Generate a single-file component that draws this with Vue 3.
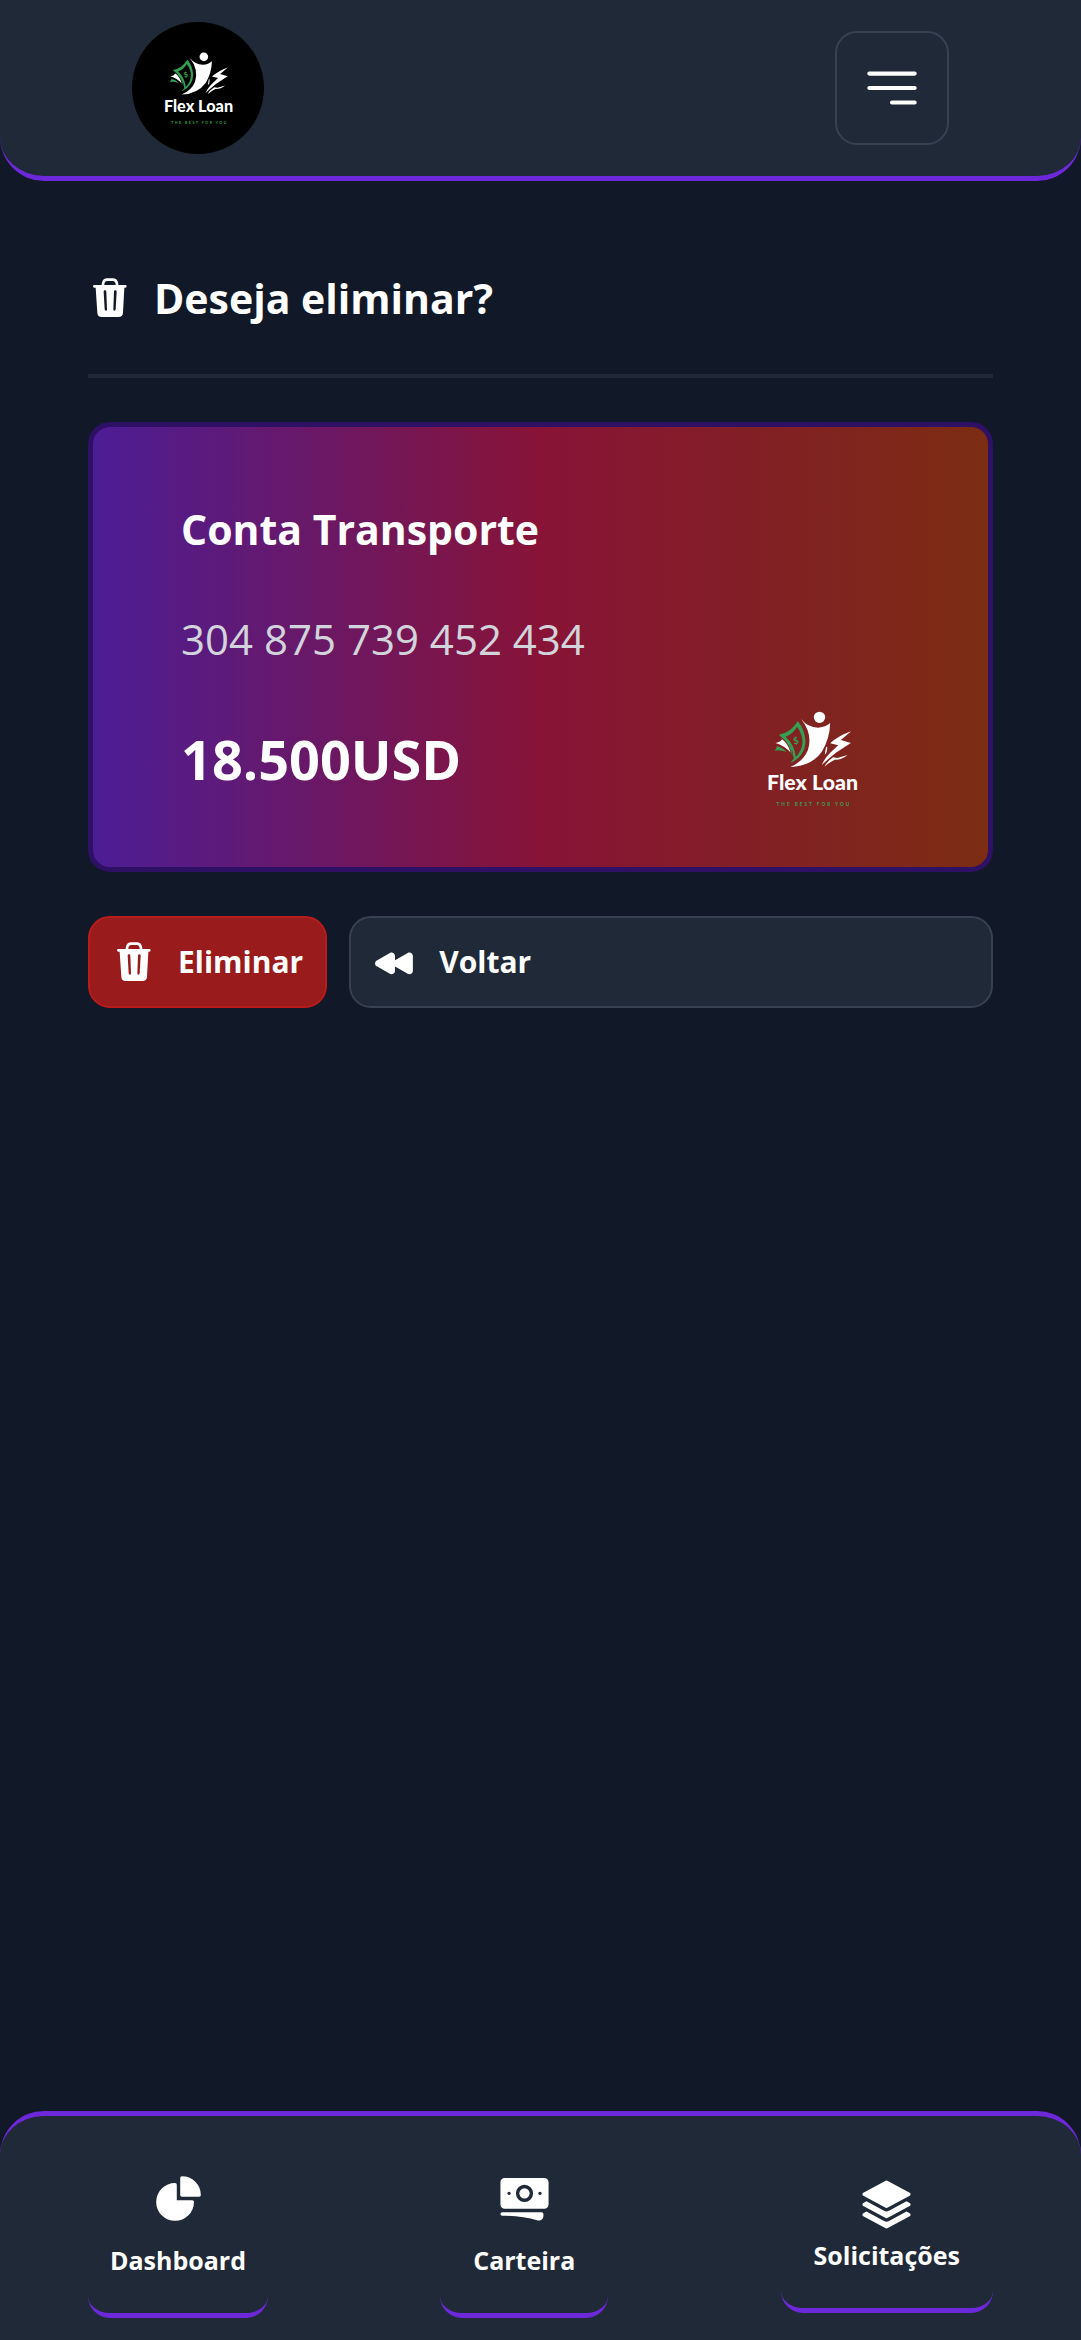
<script setup>
import { h } from 'vue'

const account = {
  name: 'Conta Transporte',
  number: '304 875 739 452 434',
  balance: '18.500USD'
}

const navItems = [
  {
    label: 'Dashboard',
    size: 'narrow',
    paths: [
      'M2.25 13.5a8.25 8.25 0 0 1 8.25-8.25.75.75 0 0 1 .75.75v6.75H18a.75.75 0 0 1 .75.75 8.25 8.25 0 0 1-16.5 0Z',
      'M12.75 3a.75.75 0 0 1 .75-.75 8.25 8.25 0 0 1 8.25 8.25.75.75 0 0 1-.75.75h-7.5a.75.75 0 0 1-.75-.75V3Z'
    ]
  },
  {
    label: 'Carteira',
    size: 'wide',
    paths: [
      'M12 7.5a2.25 2.25 0 1 0 0 4.5 2.25 2.25 0 0 0 0-4.5Z',
      'M1.5 4.875C1.5 3.839 2.34 3 3.375 3h17.25c1.035 0 1.875.84 1.875 1.875v9.75c0 1.036-.84 1.875-1.875 1.875H3.375A1.875 1.875 0 0 1 1.5 14.625v-9.75ZM8.25 9.75a3.75 3.75 0 1 1 7.5 0 3.75 3.75 0 0 1-7.5 0ZM18.75 9a.75.75 0 0 0-.75.75v.008c0 .414.336.75.75.75h.008a.75.75 0 0 0 .75-.75V9.75a.75.75 0 0 0-.75-.75h-.008ZM4.5 9.75A.75.75 0 0 1 5.25 9h.008a.75.75 0 0 1 .75.75v.008a.75.75 0 0 1-.75.75H5.25a.75.75 0 0 1-.75-.75V9.75Z',
      'M2.25 18a.75.75 0 0 0 0 1.5c5.4 0 10.63.722 15.6 2.075 1.19.324 2.4-.558 2.4-1.82V18.75a.75.75 0 0 0-.75-.75H2.25Z'
    ]
  },
  {
    label: 'Solicitações',
    size: 'wide compact',
    paths: [
      'M11.644 1.59a.75.75 0 0 1 .712 0l9.75 5.25a.75.75 0 0 1 0 1.32l-9.75 5.25a.75.75 0 0 1-.712 0l-9.75-5.25a.75.75 0 0 1 0-1.32l9.75-5.25Z',
      'm3.265 10.602 7.668 4.129a2.25 2.25 0 0 0 2.134 0l7.668-4.13 1.37.739a.75.75 0 0 1 0 1.32l-9.75 5.25a.75.75 0 0 1-.71 0l-9.75-5.25a.75.75 0 0 1 0-1.32l1.37-.738Z',
      'm10.933 19.231-7.668-4.13-1.37.739a.75.75 0 0 0 0 1.32l9.75 5.25c.221.12.489.12.71 0l9.75-5.25a.75.75 0 0 0 0-1.32l-1.37-.738-7.668 4.13a2.25 2.25 0 0 1-2.134-.001Z'
    ]
  }
]

const TrashIcon = () =>
  h('svg', { viewBox: '0 0 132 132', 'aria-hidden': 'true' }, [
    h('path', {
      fill: 'none', stroke: 'currentColor', 'stroke-width': 8,
      d: 'M45 30V24Q47 11 58 11H74Q85 11 87 24V30'
    }),
    h('path', {
      fill: 'currentColor', 'fill-rule': 'evenodd',
      d: 'M19 27H112Q116 27 116 31Q116 35 112 35H109L105 110Q104 123 91 123H41Q29 123 28 110L23 35H19Q15 35 15 31Q15 27 19 27ZM47 47L50 100Q50 104 54 104Q58 104 57 100L55 47Q55 43 51 43Q47 43 47 47ZM78 47L76 100Q76 104 79 104Q83 104 83 100L86 47Q86 43 82 43Q78 43 78 47Z'
    })
  ])

const BrandMark = () =>
  h('svg', { viewBox: '20 30 272 288', role: 'img', 'aria-label': 'Flex Loan' }, [
    h('g', { fill: '#fff' }, [
      h('circle', { cx: 177, cy: 49, r: 17 }),
      h('path', { d: 'M122 54Q142 80 173 80Q196 78 209 66Q208 112 184 152Q152 196 89 198Q128 182 142 148Q158 100 122 54Z' }),
      h('path', { d: 'M272 91L241 117L271 126L226 155Q202 174 184 192Q192 169 222 143L233 133L209 127Q234 104 272 91Z' }),
      h('path', { d: 'M261 162Q243 177 223 176Q207 183 192 197Q199 181 218 169L231 171Z' }),
      h('path', { d: 'M197 137Q194 150 193 161Q201 154 200 138Z' }),
      h('path', { d: 'M45 126Q58 125 65 115Q82 128 90 154Q71 134 45 126Z' })
    ]),
    h('g', { fill: '#34a053' }, [
      h('path', { 'fill-rule': 'evenodd', d: 'M112 60Q133 87 135 119Q135 164 90 186Q94 178 100 173Q98 132 55 101Q91 96 112 60ZM110 77Q95 101 75 107Q102 131 106 168Q125 148 126 123Q126 99 110 77Z' }),
      h('path', { d: 'M42 149Q48 145 49 136Q66 140 78 153Q58 145 42 149Z' }),
      h('path', { d: 'M55 101Q90 117 97 164Q93 159 91 149Q82 120 55 101Z' })
    ]),
    h('text', { class: 'mark-currency', x: 98, y: 129, transform: 'rotate(-12 105 119)' }, '$'),
    h('text', { class: 'mark-name', x: 156, y: 267, 'text-anchor': 'middle' }, 'Flex Loan'),
    h('text', { class: 'mark-tagline', x: 160, y: 314, 'text-anchor': 'middle' }, 'THE BEST FOR YOU')
  ])
</script>

<template>
  <div class="page">
    <header class="topbar">
      <a href="#" class="brand"><BrandMark class="brand-mark" /></a>
      <button type="button" class="menu" aria-label="Menu">
        <svg viewBox="0 0 24 24" aria-hidden="true">
          <path d="M3.75 6.75h16.5M3.75 12h16.5M12 17.25h8.25" fill="none" stroke="currentColor" stroke-width="1.5" stroke-linecap="round" />
        </svg>
      </button>
    </header>

    <main>
      <h1 class="title"><TrashIcon class="icon" />Deseja eliminar?</h1>

      <section class="card">
        <h2>{{ account.name }}</h2>
        <p class="number">{{ account.number }}</p>
        <div class="balance-row">
          <strong>{{ account.balance }}</strong>
          <BrandMark class="card-mark" />
        </div>
      </section>

      <div class="actions">
        <button type="button" class="action danger"><TrashIcon class="icon" />Eliminar</button>
        <button type="button" class="action back">
          <svg class="icon" viewBox="0 0 24 24" aria-hidden="true">
            <path fill="currentColor" d="M9.195 18.44c1.25.714 2.805-.189 2.805-1.629v-2.34l6.945 3.968c1.25.715 2.805-.188 2.805-1.628V8.69c0-1.44-1.555-2.343-2.805-1.628L12 11.029v-2.34c0-1.44-1.555-2.343-2.805-1.628l-7.108 4.061c-1.26.72-1.26 2.536 0 3.256l7.108 4.061Z" />
          </svg>
          Voltar
        </button>
      </div>
    </main>

    <nav class="tabs">
      <a v-for="item in navItems" :key="item.label" href="#" class="tab" :class="item.size">
        <svg viewBox="0 0 24 24" fill="currentColor" fill-rule="evenodd" aria-hidden="true">
          <path v-for="d in item.paths" :key="d" :d="d" />
        </svg>
        <span>{{ item.label }}</span>
      </a>
    </nav>
  </div>
</template>

<style>
body {
  margin: 0;
  background: #111827;
}

.mark-name {
  font: 900 64px Lato, sans-serif;
  fill: #fff;
}

.mark-tagline {
  font: 700 14px Lato, sans-serif;
  letter-spacing: 6px;
  fill: #34a053;
}

.mark-currency {
  font: 700 28px Lato, sans-serif;
  fill: #34a053;
}
</style>

<style scoped>
.page {
  display: flex;
  flex-direction: column;
  min-height: 100vh;
  color: #fff;
  background: #111827;
  font-family: "Segoe UI", "Open Sans", "Noto Sans", sans-serif;
}

.page * {
  box-sizing: border-box;
}

svg {
  display: block;
  flex: none;
}

button {
  font: inherit;
  color: inherit;
  cursor: pointer;
}

.topbar {
  display: flex;
  align-items: center;
  justify-content: space-between;
  padding: 22px 132px;
  background: #1f2937;
  border-bottom: 5px solid #6d28d9;
  border-radius: 0 0 44px 44px;
}

.brand {
  display: flex;
  align-items: center;
  justify-content: center;
  width: 132px;
  height: 132px;
  background: #000;
  border-radius: 50%;
}

.brand-mark {
  width: 69px;
  height: 73px;
}

.menu {
  padding: 22px;
  background: none;
  border: 2px solid #374151;
  border-radius: 22px;
}

.menu svg {
  width: 66px;
  height: 66px;
}

main {
  padding: 84px 88px 44px;
}

.icon {
  width: 44px;
  height: 44px;
}

.title {
  display: flex;
  align-items: center;
  gap: 22px;
  margin: 0 0 44px;
  padding-bottom: 43px;
  border-bottom: 4px solid #1f2937;
  font-size: 41px;
  line-height: 66px;
  font-weight: 700;
}

.card {
  padding: 72px 130px 60px 88px;
  border: 5px solid #2e1065;
  border-radius: 22px;
  background: linear-gradient(to right, #4c1d95, #881337, #7c2d12);
}

.card h2 {
  margin: 0;
  font-size: 41px;
  line-height: 60px;
}

.number {
  margin: 50px 0 42px;
  font-size: 42px;
  line-height: 60px;
  color: #d1d5db;
}

.balance-row {
  display: flex;
  align-items: center;
  justify-content: space-between;
}

.balance-row strong {
  font-size: 54px;
  line-height: 76px;
}

.card-mark {
  width: 91px;
  height: 96px;
}

.actions {
  display: flex;
  gap: 22px;
  margin-top: 44px;
}

.action {
  display: flex;
  align-items: center;
  gap: 22px;
  padding: 22px;
  border: 2px solid;
  border-radius: 22px;
  font-size: 30px;
  line-height: 44px;
  font-weight: 700;
}

.danger {
  background: #991b1b;
  border-color: #b91c1c;
}

.back {
  flex: 1;
  background: #1f2937;
  border-color: #374151;
}

.tabs {
  display: flex;
  align-items: center;
  justify-content: space-between;
  margin-top: auto;
  padding: 22px 88px;
  background: #1f2937;
  border-top: 5px solid #6d28d9;
  border-radius: 44px 44px 0 0;
}

.tab {
  display: flex;
  flex-direction: column;
  align-items: center;
  gap: 16px;
  padding: 33px 22px 35px;
  color: inherit;
  border-bottom: 5px solid #6d28d9;
  border-radius: 22px;
  font-size: 25px;
  line-height: 36px;
  font-weight: 700;
  text-decoration: none;
}

.tab.wide {
  padding-inline: 33px;
}

.tab.compact {
  gap: 5px;
}

.tab svg {
  width: 55px;
  height: 55px;
}
</style>
